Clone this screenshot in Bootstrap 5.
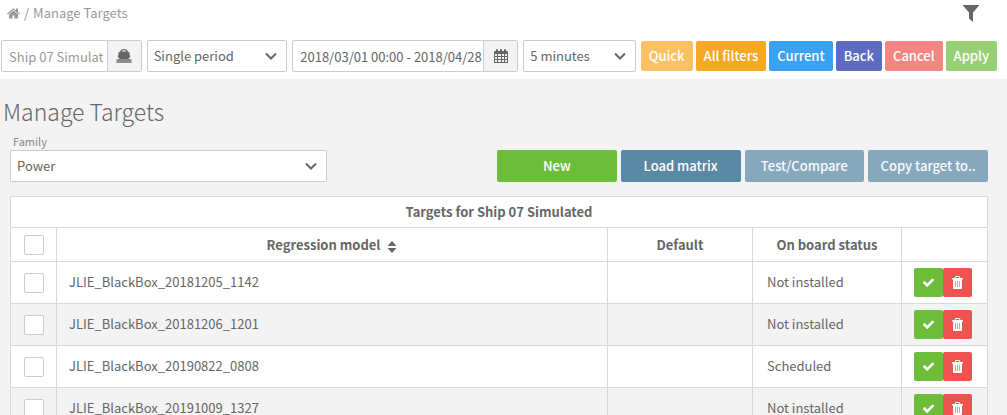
<!DOCTYPE html>
<html lang="en">
<head>
<meta charset="utf-8">
<meta name="viewport" content="width=device-width, initial-scale=1">
<title>Manage Targets</title>
<link href="https://cdn.jsdelivr.net/npm/bootstrap@5.3.0/dist/css/bootstrap.min.css" rel="stylesheet">
<style>
  body { font-family: "Noto Sans CJK JP", "Source Sans Pro", sans-serif; font-size: 13px; line-height: 20px; color: #666; background: #f3f3f3; }
  svg { display: block; fill: currentColor; }
  .topline { padding: 3px 27px 17px 7px; }
  .crumbs { line-height: 20px; }
  .crumbs a, .crumbs .active { color: #999; text-decoration: none; }
  .crumbs .breadcrumb-item + .breadcrumb-item { padding-left: 4px; }
  .crumbs .breadcrumb-item + .breadcrumb-item::before { padding-right: 4px; color: #999; }
  .form-control, .form-select, .input-group-text { height: 32px; border-color: #ccc; border-radius: 2px; font-size: 13px; line-height: 20px; color: #666; }
  .form-control { padding: 5px 4px 5px 7px; min-width: 0; }
  .form-control:disabled { background: #fff; color: #999; }
  .f-date .form-control { padding-right: 0; }
  .form-select { padding: 5px 24px 5px 6px; background-color: #fff; background-position: right 8px center; background-size: 14px 14px;
    background-image: url("data:image/svg+xml,%3csvg xmlns='http://www.w3.org/2000/svg' viewBox='0 0 14 14'%3e%3cpath fill='none' stroke='%23666' stroke-width='2' d='M2 4.5l5 5 5-5'/%3e%3c/svg%3e"); }
  .input-group-text { width: 35px; padding: 0; justify-content: center; background: #f3f3f3; }
  .filters .f-ship, .filters .f-period { flex: 140 1 140px; }
  .filters .f-date { flex: 225 1 225px; }
  .filters .f-step { flex: 112 1 112px; }
  .filters { gap: 5px; padding: 0 10px 7px 1px; }
  .quick { gap: 3px; }
  .btn { --bs-btn-border-width: 0; --bs-btn-color: #fff; --bs-btn-hover-color: #fff; --bs-btn-disabled-color: #fff; --bs-btn-border-radius: 2px; --bs-btn-font-size: 13px; --bs-btn-line-height: 20px; --bs-btn-font-weight: 500; --bs-btn-padding-x: 8px; --bs-btn-padding-y: 5px; background: var(--tone); white-space: nowrap; }
  .btn:hover { background: var(--tone); }
  .btn:disabled { background: var(--tone); --bs-btn-disabled-opacity: .7; }
  .amber { --tone: #f7a823; } .sky { --tone: #39a2f5; } .indigo { --tone: #5d6bc0; } .rose { --tone: #ef5350; } .leaf { --tone: #6cbd3a; } .steel { --tone: #5a89a6; }
  h1 { font-family: "Noto Sans CJK JP Light", "Noto Sans CJK JP", sans-serif; font-size: 23px; font-weight: 300; line-height: 32px; margin-bottom: 5px; padding: 16px 0 0 3px; }
  .content-area { padding: 0 19px 0 10px; }
  .family-label { font-size: 11px; line-height: 18px; color: #888; padding-left: 3px; }
  .tools { display: grid; grid-template-columns: 317fr 170fr 491fr; align-items: end; margin-bottom: 14px; }
  .actions { display: grid; grid-template-columns: repeat(4, 1fr); gap: 4px; }
  .actions .btn { height: 32px; }
  .targets { --bs-table-bg: #fff; --bs-table-color: #666; table-layout: fixed; border-color: #d9d9d9; }
  .targets tbody tr:nth-child(even) { --bs-table-bg: #f3f3f3; }
  .targets th { height: 34px; padding: 0; text-align: center; vertical-align: middle; font-weight: 700; }
  .targets thead tr:first-child th { height: 31px; }
  .targets td { height: 42px; padding: 0 12px 2px; vertical-align: middle; }
  .targets .status { padding-left: 14px; }
  .targets .tasks { padding-bottom: 0; }
  .targets .pick { text-align: center; padding: 0; }
  .form-check-input { width: 20px; height: 20px; margin: 0; border-color: #ccc; display: block; margin-inline: auto; }
  .form-check-input[type=checkbox] { border-radius: 2px; }
  .sort { display: inline-block; margin-left: 4px; vertical-align: -3px; }
  .row-btn { --bs-btn-padding-y: 8px; height: 29px; }
</style>
</head>
<body>
<svg class="d-none" aria-hidden="true">
  <symbol id="check" viewBox="0 0 1792 1792"><path d="M1671 566q0 40-28 68l-724 724-136 136q-28 28-68 28t-68-28l-136-136-362-362q-28-28-28-68t28-68l136-136q28-28 68-28t68 28l294 295 656-657q28-28 68-28t68 28l136 136q28 28 28 68z"/></symbol>
  <symbol id="trash" viewBox="0 0 13 13"><path fill-rule="evenodd" d="M4.500 0h4l1 2H12v1.500h-1V12q0 1-1 1H3q-1 0-1-1V3.500H1V2h2.500zm.5 1l-.5 1h4L8 1z"/><path fill="#f3a06e" d="M4 5h1v6H4zM6 5h1v6H6zM8 5h1v6H8z"/></symbol>
</svg>

<header class="bg-white">
  <div class="d-flex justify-content-between align-items-center topline">
    <nav aria-label="breadcrumb">
      <ol class="breadcrumb crumbs mb-0">
        <li class="breadcrumb-item d-flex align-items-center"><a href="#" aria-label="Home"><svg width="13" height="13" viewBox="64 128 1664 1536"><path d="M1472 992v480q0 26-19 45t-45 19h-384v-384h-256v384h-384q-26 0-45-19t-19-45v-480q0-1 .5-3t.5-3l575-474 575 474q1 2 1 6zm223-69l-62 74q-8 9-21 11h-3q-13 0-21-7l-692-577-692 577q-12 8-24 7-13-2-21-11l-62-74q-8-10-7-23.500t11-21.500l719-599q32-26 76-26t76 26l244 204v-195q0-14 9-23t23-9h192q14 0 23 9t9 23v408l219 182q10 8 11 21.500t-7 23.500z"/></svg></a></li>
        <li class="breadcrumb-item active" aria-current="page">Manage Targets</li>
      </ol>
    </nav>
    <a href="#" class="text-reset" aria-label="Filter"><svg width="18" height="20" viewBox="0 0 18 20"><path d="M.5 2h17L11 9.500V19l-4-3.500v-6z"/></svg></a>
  </div>

  <form class="d-flex align-items-center filters">
    <div class="input-group flex-nowrap f-ship">
      <input type="text" class="form-control" value="Ship 07 Simulated" aria-label="Ship" disabled>
      <span class="input-group-text"><svg width="16" height="16" viewBox="0 0 16 16"><path d="M8 1C5.700 1 4.500 2 4.200 3.500l-1.700 1V7L1.500 8 3.500 11h9L14.500 8l-1-1V4.500l-1.700-1C11.500 2 10.300 1 8 1zm0 1.200c1.300 0 2 .4 2.300 1.300H5.700C6 2.600 6.700 2.200 8 2.200z"/><path fill="#918b88" d="M.5 11h15v4H.5z"/></svg></span>
    </div>
    <select class="form-select f-period" aria-label="Period"><option>Single period</option></select>
    <div class="input-group flex-nowrap f-date">
      <input type="text" class="form-control" value="2018/03/01 00:00 - 2018/04/28" aria-label="Date range">
      <span class="input-group-text"><svg width="14" height="14" viewBox="0 0 14 14"><path fill-rule="evenodd" d="M1 2h1V1q0-1 1-1t1 1v1h2V1q0-1 1-1t1 1v1h2V1q0-1 1-1t1 1v1h1q1 0 1 1v11H0V3q0-1 1-1zM1 5v2h2V5zm3 0v2h3V5zm4 0v2h2V5zm3 0v2h2V5zM1 8v2h2V8zm3 0v2h3V8zm4 0v2h2V8zm3 0v2h2V8zM1 11v2h2v-2zm3 0v2h3v-2zm4 0v2h2v-2zm3 0v2h2v-2z"/></svg></span>
    </div>
    <select class="form-select f-step" aria-label="Interval"><option>5 minutes</option></select>
    <div class="d-flex quick">
      <button type="button" class="btn amber" disabled>Quick</button>
      <button type="button" class="btn amber">All filters</button>
      <button type="button" class="btn sky">Current</button>
      <button type="button" class="btn indigo">Back</button>
      <button type="button" class="btn rose" disabled>Cancel</button>
      <button type="submit" class="btn leaf" disabled>Apply</button>
    </div>
  </form>
</header>

<main>
  <h1>Manage Targets</h1>
  <div class="content-area">
    <div class="tools">
      <div>
        <label for="family" class="family-label d-block">Family</label>
        <select id="family" class="form-select"><option>Power</option></select>
      </div>
      <span></span>
      <div class="actions">
        <button type="button" class="btn leaf">New</button>
        <button type="button" class="btn steel">Load matrix</button>
        <button type="button" class="btn steel" disabled>Test/Compare</button>
        <button type="button" class="btn steel" disabled>Copy target to..</button>
      </div>
    </div>

    <table class="table table-bordered targets">
      <colgroup><col style="width:46px"><col><col style="width:145px"><col style="width:149px"><col style="width:86px"></colgroup>
      <thead>
        <tr><th colspan="5">Targets for Ship 07 Simulated</th></tr>
        <tr>
          <th class="pick"><input type="checkbox" class="form-check-input" aria-label="Select all"></th>
          <th>Regression model <svg class="sort" width="10" height="12" viewBox="0 0 10 12"><path d="M5 0l4.500 5h-9zM.5 7h9L5 12z"/></svg></th>
          <th>Default</th>
          <th>On board status</th>
          <th></th>
        </tr>
      </thead>
      <tbody id="rows"></tbody>
    </table>
  </div>
</main>

<script src="https://cdn.jsdelivr.net/npm/bootstrap@5.3.0/dist/js/bootstrap.bundle.min.js"></script>
<script>
  const targets = [
    ["JLIE_BlackBox_20181205_1142", "Not installed"],
    ["JLIE_BlackBox_20181206_1201", "Not installed"],
    ["JLIE_BlackBox_20190822_0808", "Scheduled"],
    ["JLIE_BlackBox_20191009_1327", "Not installed"]
  ];
  document.getElementById("rows").innerHTML = targets.map(([name, status]) => `
    <tr>
      <td class="pick"><input type="checkbox" class="form-check-input" aria-label="Select ${name}"></td>
      <td>${name}</td><td></td><td class="status">${status}</td>
      <td class="tasks"><div class="d-flex">
        <button type="button" class="btn leaf row-btn" aria-label="Activate"><svg width="13" height="13"><use href="#check"/></svg></button>
        <button type="button" class="btn rose row-btn" aria-label="Delete"><svg width="13" height="13"><use href="#trash"/></svg></button>
      </div></td>
    </tr>`).join("");
</script>
</body>
</html>
